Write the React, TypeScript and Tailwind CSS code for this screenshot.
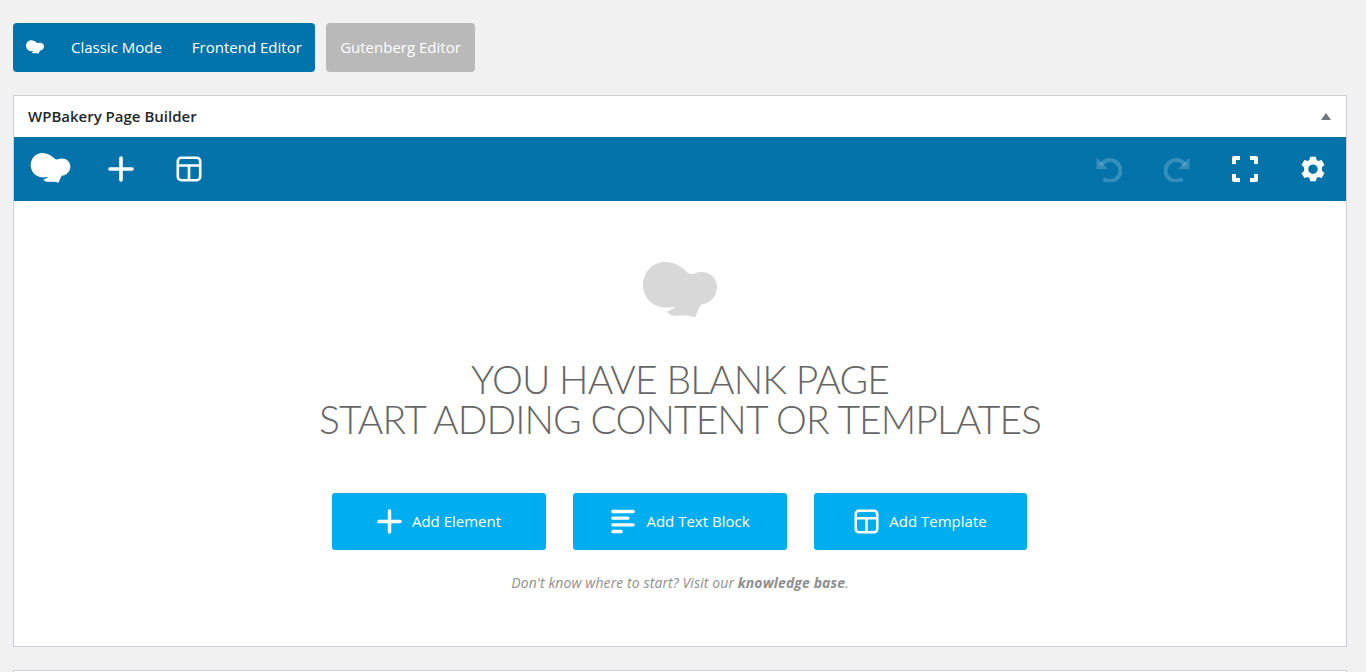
const hatPath =
  'M22 0C31 0 38 4 44 10C47 12.500 49 12.500 51 11.500C63 7 74 14 74 25C74 35 66 42 58 42.500C56 46 54 50 52 55.500C44 52 36 54.500 29 53.500C27 53 25 51.500 23.500 49.500C27 48.500 30 47 33 44.500C29 45.500 25.500 45.500 22 45.500C10 45.500 0 35 0 23C0 10 10 0 22 0Z';

function Hat({ className }: { className: string }) {
  return (
    <svg viewBox="0 0 74 56" className={className} fill="currentColor">
      <path d={hatPath} />
    </svg>
  );
}

function PlusIcon({ className }: { className: string }) {
  return (
    <svg viewBox="0 0 26 26" className={className} fill="none" stroke="currentColor" strokeWidth="3.6" strokeLinecap="round">
      <path d="M13 2v22M2 13h22" />
    </svg>
  );
}

function TemplateIcon({ className }: { className: string }) {
  return (
    <svg viewBox="0 0 26 26" className={className} fill="none" stroke="currentColor" strokeWidth="2.6">
      <rect x="1.8" y="1.800" width="22.4" height="22.4" rx="3.500" />
      <path d="M1.800 9.500h22.400M13 9.500v14.700" />
    </svg>
  );
}

function TextIcon({ className }: { className: string }) {
  return (
    <svg viewBox="0 0 26 26" className={className} fill="none" stroke="currentColor" strokeWidth="3.6" strokeLinecap="round">
      <path d="M2.500 2.500h21M2.500 9.500h15.500M2.500 16.500h21M2.500 23.500h8.500" />
    </svg>
  );
}

function UndoIcon({ className }: { className: string }) {
  return (
    <svg viewBox="0 0 26 26" className={className} fill="none" stroke="currentColor" strokeWidth="4">
      <path d="M5 9A10.500 10.500 0 1 1 7.500 22.800" />
      <path d="M0.500 1.500v11.500h11.500z" fill="currentColor" stroke="none" />
    </svg>
  );
}

function FullscreenIcon({ className }: { className: string }) {
  return (
    <svg viewBox="0 0 26 26" className={className} fill="none" stroke="currentColor" strokeWidth="4" strokeLinejoin="round">
      <path d="M8 2H2v6M18 2h6v6M8 24H2v-6M18 24h6v-6" />
    </svg>
  );
}

function GearIcon({ className }: { className: string }) {
  return (
    <svg viewBox="0 0 24 24" className={className} fill="currentColor">
      <path
        fillRule="evenodd"
        d="M9.400.6h5.200l.7 3.200 1.600.9 3.100-1 2.600 4.500-2.400 2.200v3.200l2.400 2.200-2.600 4.500-3.100-1-1.600.9-.7 3.200H9.400l-.7-3.200-1.600-.9-3.100 1L1.400 16l2.400-2.200v-3.200L1.400 8.400 4 3.700l3.100 1 1.600-.9.700-3.200ZM12 7.800a4.400 4.400 0 1 0 0 8.800 4.400 4.400 0 0 0 0-8.800Z"
      />
    </svg>
  );
}

function AddButton({ icon, label, width }: { icon: React.ReactNode; label: string; width: string }) {
  return (
    <button className={`flex h-[57px] items-center justify-center gap-[10px] rounded-[3px] bg-[#00aeef] text-[15px] text-white ${width}`}>
      {icon}
      <span>{label}</span>
    </button>
  );
}

export default function App() {
  return (
    <div className="h-[672px] overflow-hidden bg-[#f1f1f1] pl-[13px] pt-[23px] font-['Open_Sans',sans-serif] text-[15px]">
      <div className="flex gap-[11px]">
        <div className="flex h-[49px] w-[302px] items-center rounded-[4px] bg-[#0073aa] text-white">
          <Hat className="ml-[13px] mb-[2px] h-[14px] w-[18px]" />
          <span className="ml-[27px]">Classic Mode</span>
          <span className="ml-[30px]">Frontend Editor</span>
        </div>
        <div className="flex h-[49px] w-[149px] items-center justify-center rounded-[4px] bg-[#b9b9b9] text-white">
          Gutenberg Editor
        </div>
      </div>

      <div className="mt-[23px] h-[552px] w-[1334px] border border-[#ccd0d4] bg-white">
        <div className="flex h-[41px] items-center justify-between pl-[14px] pr-[15px] text-[#23282d]">
          <span className="font-semibold">WPBakery Page Builder</span>
          <span className="h-0 w-0 border-x-[5px] border-b-[7px] border-x-transparent border-b-[#72777c]" />
        </div>
        <div className="flex h-[64px] items-center justify-between bg-[#0473aa] text-white">
          <div className="flex items-center">
            <div className="flex w-[72px] justify-center">
              <Hat className="mb-[3px] h-[30px] w-[41px]" />
            </div>
            <div className="flex w-[70px] justify-center">
              <PlusIcon className="mb-[1px] h-[26px] w-[26px]" />
            </div>
            <div className="flex w-[65px] justify-center">
              <TemplateIcon className="mb-[1px] h-[26px] w-[26px]" />
            </div>
          </div>
          <div className="flex items-center">
            <div className="flex w-[68px] justify-center text-white/20">
              <UndoIcon className="h-[26px] w-[26px]" />
            </div>
            <div className="flex w-[68px] justify-center text-white/20">
              <UndoIcon className="h-[26px] w-[26px] -scale-x-100" />
            </div>
            <div className="flex w-[68px] justify-center">
              <FullscreenIcon className="mb-[1px] h-[26px] w-[26px]" />
            </div>
            <div className="flex w-[67px] justify-center">
              <GearIcon className="mb-[1px] h-[26px] w-[26px]" />
            </div>
          </div>
        </div>
        <div className="flex flex-col items-center pt-[61px]">
          <Hat className="h-[56px] w-[74px] text-[#d8d8d8]" />
          <h1 className="mt-[41px] text-center font-['Lato',sans-serif] text-[39px] font-light leading-[40px] tracking-[-0.9px] text-[#666666]">
            YOU HAVE BLANK PAGE
            <br />
            START ADDING CONTENT OR TEMPLATES
          </h1>
          <div className="mr-[1px] mt-[54px] flex gap-[27px]">
            <AddButton width="w-[214px]" label="Add Element" icon={<PlusIcon className="h-[25px] w-[25px]" />} />
            <AddButton width="w-[214px]" label="Add Text Block" icon={<TextIcon className="h-[25px] w-[26px]" />} />
            <AddButton width="w-[213px]" label="Add Template" icon={<TemplateIcon className="h-[25px] w-[25px]" />} />
          </div>
          <p className="mt-[22px] text-[14px] italic tracking-[0.1px] text-[#8f8f8f]">
            Don't know where to start? Visit our <span className="font-bold">knowledge base</span>.
          </p>
        </div>
      </div>
      <div className="mt-[23px] h-[40px] w-[1334px] border border-[#ccd0d4] bg-white" />
    </div>
  );
}
